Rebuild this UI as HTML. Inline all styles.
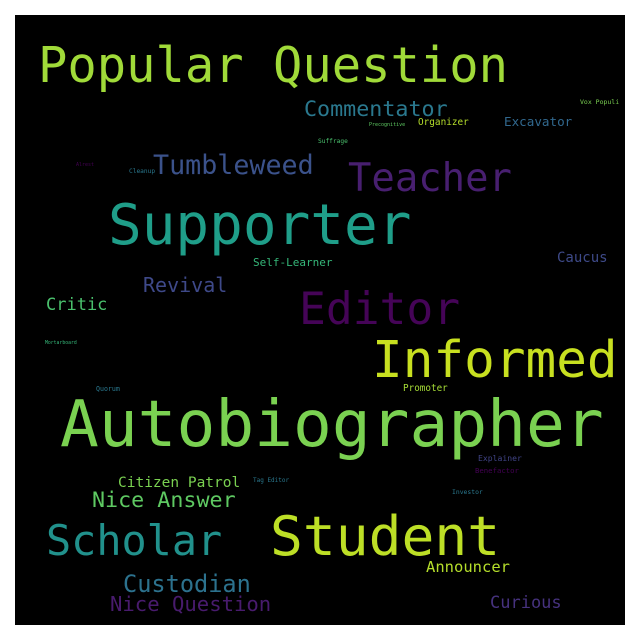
<!DOCTYPE html>
<html><head><meta charset="utf-8"><style>
html,body{margin:0;padding:0;background:#fff;}
#c{position:relative;width:640px;height:640px;background:#fff;overflow:hidden;}
#b{position:absolute;left:15px;top:15px;width:610px;height:610px;background:#000;}
span{position:absolute;font-family:"DejaVu Sans Mono","Liberation Mono",monospace;line-height:1;white-space:nowrap;}
</style></head><body><div id="c"><div id="b"></div>
<span style="left:38px;top:41.7px;font-size:48.8px;color:#a0da39">Popular Question</span>
<span style="left:304px;top:98.6px;font-size:21.7px;color:#2a788e">Commentator</span>
<span style="left:504px;top:116.3px;font-size:12.6px;color:#31688e">Excavator</span>
<span style="left:580px;top:98.5px;font-size:6.5px;color:#7ad151">Vox Populi</span>
<span style="left:369px;top:122.8px;font-size:5px;color:#5ec962">Precognitive</span>
<span style="left:418px;top:118px;font-size:9.4px;color:#b5de2b">Organizer</span>
<span style="left:318px;top:138.8px;font-size:6.2px;color:#4ac16d">Suffrage</span>
<span style="left:153px;top:153.4px;font-size:26.7px;color:#3b528b">Tumbleweed</span>
<span style="left:348px;top:160.1px;font-size:38.9px;color:#481f70">Teacher</span>
<span style="left:129px;top:168.8px;font-size:6.2px;color:#2a788e">Cleanup</span>
<span style="left:76px;top:162.8px;font-size:5px;color:#440154">Alrest</span>
<span style="left:108px;top:197.6px;font-size:56px;color:#1f9e89">Supporter</span>
<span style="left:253px;top:256.7px;font-size:11px;color:#35b779">Self-Learner</span>
<span style="left:557px;top:251.2px;font-size:14px;color:#3e4a89">Caucus</span>
<span style="left:143px;top:275.1px;font-size:20px;color:#3e4989">Revival</span>
<span style="left:46px;top:296.6px;font-size:17px;color:#4ac16d">Critic</span>
<span style="left:299px;top:287.3px;font-size:44.6px;color:#450457">Editor</span>
<span style="left:45px;top:341.9px;font-size:4.8px;color:#35b779">Mortarboard</span>
<span style="left:372px;top:334.9px;font-size:51px;color:#c8e020">Informed</span>
<span style="left:96px;top:386.4px;font-size:6.6px;color:#2a788e">Quorum</span>
<span style="left:403px;top:384.1px;font-size:9.3px;color:#a5db36">Promoter</span>
<span style="left:60px;top:393.4px;font-size:64.5px;color:#7ad151">Autobiographer</span>
<span style="left:478px;top:454.1px;font-size:8.1px;color:#414487">Explainer</span>
<span style="left:475px;top:466.8px;font-size:7.3px;color:#440154">Benefactor</span>
<span style="left:118px;top:475.7px;font-size:14.5px;color:#7ad151">Citizen Patrol</span>
<span style="left:253px;top:477.9px;font-size:6px;color:#2a788e">Tag Editor</span>
<span style="left:452px;top:488.6px;font-size:6.4px;color:#2a788e">Investor</span>
<span style="left:92px;top:489.6px;font-size:21.7px;color:#5ec962">Nice Answer</span>
<span style="left:46px;top:519.6px;font-size:41.8px;color:#21918c">Scholar</span>
<span style="left:270px;top:508.8px;font-size:54.6px;color:#bddf26">Student</span>
<span style="left:123px;top:573px;font-size:23.6px;color:#2c728e">Custodian</span>
<span style="left:426px;top:559.9px;font-size:15.5px;color:#b5de2b">Announcer</span>
<span style="left:110px;top:593.6px;font-size:20.6px;color:#481b6d">Nice Question</span>
<span style="left:490px;top:594.6px;font-size:17px;color:#46327e">Curious</span>
</div></body></html>
